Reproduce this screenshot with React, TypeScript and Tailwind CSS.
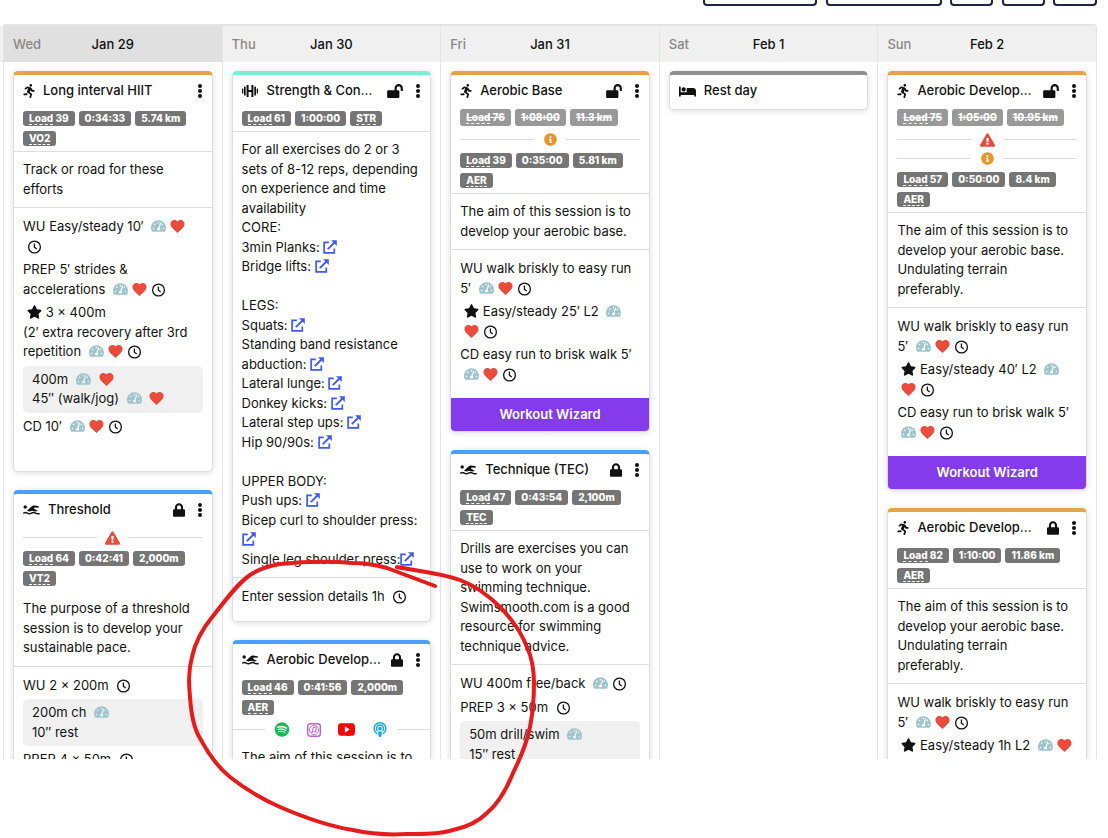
import React from 'react';
import { FaBed, FaExclamationTriangle, FaInfoCircle, FaLock, FaLockOpen, FaPodcast, FaRunning, FaSpotify, FaStar, FaTachometerAlt } from 'react-icons/fa';
import { IoLogoYoutube } from 'react-icons/io5';

type Sport = 'run' | 'swim' | 'strength' | 'rest';

const barColors: Record<Sport, string> = {
  run: 'border-t-[#e6a44a]',
  swim: 'border-t-[#4a9ff8]',
  strength: 'border-t-[#7aefd8]',
  rest: 'border-t-[#909090]',
};

function Swimmer() {
  return (
    <svg viewBox="0 0 17 10" className="w-[17px] h-[10px] mr-2 shrink-0" fill="currentColor">
      <circle cx="2.2" cy="2" r="1.7" />
      <path d="M4 5.8L8.2 1.8C9.2.9 10.3.5 11.5.6L15.8 1.2 15.6 2.7 11.8 2.6 10.8 3.4 15 6 12 6.6 9.2 5.8 6.5 6.6Z" />
      <path d="M.3 8.4C1.8 7.2 3 7.4 4.3 8.2S7 9.1 8.5 8.2 11.3 7.4 12.6 8.2 15.2 9 16.7 8.6" fill="none" stroke="currentColor" strokeWidth="1.5" />
    </svg>
  );
}

function Barbell() {
  return (
    <svg viewBox="0 0 16 12" className="w-4 h-3 mr-[9px] shrink-0" fill="currentColor">
      <rect x="0" y="3.5" width="1.3" height="5" rx=".5" />
      <rect x="2" y="1.5" width="1.7" height="9" rx=".6" />
      <rect x="4.6" y="0" width="2" height="12" rx=".6" />
      <rect x="6" y="5" width="4" height="2" />
      <rect x="9.4" y="0" width="2" height="12" rx=".6" />
      <rect x="12.3" y="1.5" width="1.7" height="9" rx=".6" />
      <rect x="14.7" y="3.5" width="1.3" height="5" rx=".5" />
    </svg>
  );
}

const sportIcons: Record<Sport, React.ReactNode> = {
  run: <FaRunning className="w-3 h-[14px] mr-2 shrink-0" />,
  swim: <Swimmer />,
  strength: <Barbell />,
  rest: <FaBed className="w-[17px] h-[15px] mr-2 shrink-0" />,
};

const Pace = () => <FaTachometerAlt className="inline-block align-[-2px] w-[15px] h-[14px] ml-1 text-[#9fc5cf]" />;
const Star = () => <FaStar className="inline-block align-[-2px] w-[15px] h-[14px] ml-1" />;

const Heart = () => (
  <svg viewBox="2 3 20 18.4" className="inline-block align-[-2px] w-[15px] h-[13px] ml-1 text-[#ea4c3c]" fill="currentColor">
    <path d="M12 21.35l-1.45-1.32C5.4 15.36 2 12.28 2 8.5 2 5.42 4.42 3 7.5 3c1.74 0 3.41.81 4.5 2.09C13.09 3.81 14.76 3 16.5 3 19.58 3 22 5.42 22 8.5c0 3.78-3.4 6.86-8.55 11.54L12 21.35z" />
  </svg>
);

const Clock = () => (
  <svg viewBox="0 0 14 14" className="inline-block align-[-3px] w-[15px] h-[14px] ml-1" fill="none" stroke="currentColor">
    <circle cx="7" cy="7" r="5.9" strokeWidth="1.3" />
    <path d="M6.9 3.6V7.2L9.2 9.1" strokeWidth="1.3" />
  </svg>
);

function Video({ name }: { name: string }) {
  return (
    <a href="#" aria-label={name} className="text-[#3d5afe]">
      <svg viewBox="0 0 14 14" className="inline-block align-[-2px] w-[14px] h-[14px]" fill="none" stroke="currentColor" strokeWidth="1.7">
        <path d="M5.8 2.4H1.1V12.9H11.3V8.4" />
        <path d="M4.8 9.2L12 2" strokeWidth="1.9" />
        <path d="M8 .2H13.8V6L11.9 4.1 9.9 2.1Z" fill="currentColor" stroke="none" />
      </svg>
    </a>
  );
}

function Dots() {
  return (
    <svg viewBox="0 0 4 14" className="w-1 h-[14px]" fill="currentColor">
      <circle cx="2" cy="2" r="2" />
      <circle cx="2" cy="7" r="2" />
      <circle cx="2" cy="12" r="2" />
    </svg>
  );
}

function Chips({ items, planned }: { items: string[]; planned?: boolean }) {
  return (
    <div className={planned ? 'flex gap-1 mb-1' : 'flex flex-wrap gap-x-1 gap-y-[5px] pt-[2px]'}>
      {items.map((item) => {
        const [first, ...rest] = item.split(' ');
        const dashed = /^[A-Z]/.test(first);
        return (
          <span
            key={item}
            className={
              planned
                ? 'h-[17px] px-[6px] rounded-[3px] bg-[#999] text-white text-[10px] leading-4 font-extrabold line-through'
                : 'h-[15px] px-[6px] rounded-[3px] bg-[#757575] text-white text-[10px] leading-[14px] font-extrabold'
            }
          >
            {dashed ? <span className="border-b border-dashed border-white">{first}</span> : first}
            {rest.length > 0 && ' ' + rest.join(' ')}
          </span>
        );
      })}
    </div>
  );
}

function Notice({ kind }: { kind: 'warning' | 'info' }) {
  return (
    <div className="flex items-center gap-2 h-[19px]">
      <div className="flex-1 h-px bg-[#ddd]" />
      <div className="w-4 flex justify-center">
        {kind === 'warning' ? (
          <FaExclamationTriangle className="w-[15px] h-[14px] text-[#e74c3c]" />
        ) : (
          <FaInfoCircle className="w-[13px] h-[13px] text-[#e8952a]" />
        )}
      </div>
      <div className="flex-1 h-px bg-[#ddd]" />
    </div>
  );
}

interface CardProps {
  sport: Sport;
  title: string;
  lock?: 'open' | 'closed';
  planned?: string[];
  notices?: ('warning' | 'info')[];
  chips?: string[];
  wizard?: boolean;
  children?: React.ReactNode;
}

function Card({ sport, title, lock, planned, notices = [], chips, wizard, children }: CardProps) {
  return (
    <article
      className={`rounded-[5px] border border-t-4 border-[#ddd] bg-white shadow-[0_1px_6px_rgba(0,0,0,0.14)] overflow-hidden ${barColors[sport]}`}
    >
      <div className="flex items-center h-[30px] pt-[2px] px-[9px]">
        {sportIcons[sport]}
        <h3 className="flex-1 min-w-0 truncate font-medium">{title}</h3>
        {lock === 'open' && <FaLockOpen className="w-4 h-[14px] ml-[10px] shrink-0" />}
        {lock === 'closed' && <FaLock className="w-3 h-[14px] ml-2 shrink-0" />}
        {chips && (
          <button aria-label="Workout menu" className="ml-3 w-[6px] flex justify-center shrink-0">
            <Dots />
          </button>
        )}
      </div>
      {chips ? (
        <div className="px-[9px] pt-1 pb-[5px]">
          {planned && <Chips items={planned} planned />}
          {notices.length > 0 && (
            <div className="mb-[2px]">
              {notices.map((kind) => (
                <Notice key={kind} kind={kind} />
              ))}
            </div>
          )}
          <Chips items={chips} />
        </div>
      ) : (
        <div className="h-1" />
      )}
      {children}
      {wizard && (
        <button className="block w-full h-[33px] bg-[#833bec] text-white font-semibold">Workout Wizard</button>
      )}
    </article>
  );
}

function Text({ plain, children }: { plain?: boolean; children: React.ReactNode }) {
  return <div className={plain ? 'px-[9px] py-2' : 'px-[9px] py-2 border-t border-[#ddd]'}>{children}</div>;
}

function Steps({ children }: { children: React.ReactNode }) {
  return <div className="px-[9px] pt-[9px] pb-[14px] border-t border-[#ddd] flex flex-col gap-1">{children}</div>;
}

function Repeat({ children }: { children: React.ReactNode }) {
  return <div className="rounded-[5px] bg-[#f0f0f0] px-[9px] py-1">{children}</div>;
}

function MusicNote() {
  return (
    <svg viewBox="0 0 14 14" className="w-[14px] h-[14px] text-[#b664d2]" fill="none" stroke="currentColor">
      <rect x=".7" y=".7" width="12.6" height="12.6" rx="2.6" strokeWidth="1.4" />
      <circle cx="7" cy="7" r="4.6" strokeWidth=".9" />
      <path d="M5.9 8.9V4.6L9 4V8.2" strokeWidth="1" />
      <circle cx="5.2" cy="9" r="1" fill="currentColor" stroke="none" />
      <circle cx="8.3" cy="8.4" r="1" fill="currentColor" stroke="none" />
    </svg>
  );
}

function Podcasts() {
  return (
    <div className="flex items-center h-5">
      <div className="flex-1 h-px bg-[#ddd]" />
      <div className="flex items-center gap-[17px] px-[9px]">
        <a href="#" aria-label="Spotify"><FaSpotify className="w-4 h-[15px] text-[#1db954]" /></a>
        <a href="#" aria-label="Apple Music"><MusicNote /></a>
        <a href="#" aria-label="YouTube"><IoLogoYoutube className="w-[17px] h-[17px] text-[#f00]" /></a>
        <a href="#" aria-label="Podcasts"><FaPodcast className="w-4 h-[15px] text-[#17a9e0]" /></a>
      </div>
      <div className="flex-1 h-px bg-[#ddd]" />
    </div>
  );
}

function Day({ name, date, today, children }: { name: string; date: string; today?: boolean; children: React.ReactNode }) {
  return (
    <section className="border-l border-[#e4e4e4] min-w-0">
      <h2
        className={
          today
            ? 'relative h-9 pt-[2px] flex items-center justify-center bg-[#e0e0e0] font-medium'
            : 'relative h-9 pt-[2px] flex items-center justify-center bg-[#f0f0f0] font-medium'
        }
      >
        <span className="absolute left-[9px] text-[#888]">{name}</span>
        {date}
      </h2>
      <div className="flex flex-col gap-[18px] p-[9px]">{children}</div>
    </section>
  );
}

export default function App() {
  const toolbar = [
    { label: 'Library', width: 'w-[114px]' },
    { label: 'Season plan', width: 'w-[116px] ml-[9px]' },
    { label: 'Previous', width: 'w-[43px] ml-2' },
    { label: 'Today', width: 'w-[43px] ml-[9px]' },
    { label: 'Next', width: 'w-[44px] ml-2' },
  ];

  return (
    <div className="relative h-screen overflow-hidden flex flex-col bg-white text-[#111] text-[13px] leading-normal font-['Inter',sans-serif]">
      {/* Toolbar */}
      <header className="h-6 shrink-0 flex justify-end items-start pr-[11px]">
        {toolbar.map((item) => (
          <button
            key={item.label}
            aria-label={item.label}
            className={`h-[6px] rounded-b-[4px] border-2 border-t-0 border-[#1f2344] ${item.width}`}
          />
        ))}
      </header>

      {/* Calendar */}
      <main className="flex-1 min-h-0 overflow-hidden flex mb-[79px]">
        <div className="w-[3px] shrink-0 mt-[2px] h-9 bg-[#f0f0f0]" />
        <div className="flex-1 grid grid-cols-5 mr-[11px] h-max min-h-full border-r border-t-2 border-[#e4e4e4] rounded-tr-[4px]">
          <Day name="Wed" date="Jan 29" today>
            <Card sport="run" title="Long interval HIIT" chips={['Load 39', '0:34:33', '5.74 km', 'VO2']}>
              <Text>Track or road for these efforts</Text>
              <Steps>
                <div>WU Easy/steady 10′ <Pace /><Heart /><Clock /></div>
                <div>PREP 5′ strides &amp; accelerations <Pace /><Heart /><Clock /></div>
                <div>
                  <Star /> 3 × 400m
                  <br />
                  (2′ extra recovery after 3rd repetition <Pace /><Heart /><Clock />
                </div>
                <Repeat>
                  <div>400m <Pace /> <Heart /></div>
                  <div>45″ (walk/jog) <Pace /> <Heart /></div>
                </Repeat>
                <div>CD 10′ <Pace /><Heart /><Clock /></div>
                <div className="h-[17px]" />
              </Steps>
            </Card>
            <Card sport="swim" title="Threshold" lock="closed" notices={['warning']} chips={['Load 64', '0:42:41', '2,000m', 'VT2']}>
              <Text plain>The purpose of a threshold session is to develop your sustainable pace.</Text>
              <Steps>
                <div>WU 2 × 200m <Clock /></div>
                <Repeat>
                  <div>200m ch <Pace /></div>
                  <div>10″ rest</div>
                </Repeat>
                <div>PREP 4 × 50m <Clock /></div>
              </Steps>
            </Card>
          </Day>

          <Day name="Thu" date="Jan 30">
            <Card sport="strength" title="Strength & Conditioning" lock="open" chips={['Load 61', '1:00:00', 'STR']}>
              <Text>
                <p>For all exercises do 2 or 3 sets of 8-12 reps, depending on experience and time availability</p>
                <p>CORE:</p>
                <p>3min Planks: <Video name="3min Planks" /></p>
                <p>Bridge lifts: <Video name="Bridge lifts" /></p>
                <br />
                <p>LEGS:</p>
                <p>Squats: <Video name="Squats" /></p>
                <p>Standing band resistance abduction: <Video name="Standing band resistance abduction" /></p>
                <p>Lateral lunge: <Video name="Lateral lunge" /></p>
                <p>Donkey kicks: <Video name="Donkey kicks" /></p>
                <p>Lateral step ups: <Video name="Lateral step ups" /></p>
                <p>Hip 90/90s: <Video name="Hip 90/90s" /></p>
                <br />
                <p>UPPER BODY:</p>
                <p>Push ups: <Video name="Push ups" /></p>
                <p>Bicep curl to shoulder press: <Video name="Bicep curl to shoulder press" /></p>
                <p>Single leg shoulder press:<Video name="Single leg shoulder press" /></p>
              </Text>
              <Steps>
                <div>Enter session details 1h <Clock /></div>
              </Steps>
            </Card>
            <Card sport="swim" title="Aerobic Development" lock="closed" chips={['Load 46', '0:41:56', '2,000m', 'AER']}>
              <Podcasts />
              <Text plain>The aim of this session is to develop your aerobic base.</Text>
            </Card>
          </Day>

          <Day name="Fri" date="Jan 31">
            <Card
              sport="run"
              title="Aerobic Base"
              lock="open"
              planned={['Load 76', '1:08:00', '11.3 km']}
              notices={['info']}
              chips={['Load 39', '0:35:00', '5.81 km', 'AER']}
              wizard
            >
              <Text>The aim of this session is to develop your aerobic base.</Text>
              <Steps>
                <div>WU walk briskly to easy run 5′ <Pace /><Heart /><Clock /></div>
                <div><Star /> Easy/steady 25′ L2 <Pace /><Heart /><Clock /></div>
                <div>CD easy run to brisk walk 5′ <Pace /><Heart /><Clock /></div>
              </Steps>
            </Card>
            <Card sport="swim" title="Technique (TEC)" lock="closed" chips={['Load 47', '0:43:54', '2,100m', 'TEC']}>
              <Text>
                Drills are exercises you can use to work on your swimming technique. Swimsmooth.com is a good resource for
                swimming technique advice.
              </Text>
              <Steps>
                <div>WU 400m free/back <Pace /><Clock /></div>
                <div>PREP 3 × 50m <Clock /></div>
                <Repeat>
                  <div>50m drill/swim <Pace /></div>
                  <div>15″ rest</div>
                </Repeat>
              </Steps>
            </Card>
          </Day>

          <Day name="Sat" date="Feb 1">
            <Card sport="rest" title="Rest day" />
          </Day>

          <Day name="Sun" date="Feb 2">
            <Card
              sport="run"
              title="Aerobic Development"
              lock="open"
              planned={['Load 75', '1:05:00', '10.95 km']}
              notices={['warning', 'info']}
              chips={['Load 57', '0:50:00', '8.4 km', 'AER']}
              wizard
            >
              <Text>The aim of this session is to develop your aerobic base. Undulating terrain preferably.</Text>
              <Steps>
                <div>WU walk briskly to easy run 5′ <Pace /><Heart /><Clock /></div>
                <div><Star /> Easy/steady 40′ L2 <Pace /><Heart /><Clock /></div>
                <div>CD easy run to brisk walk 5′ <Pace /><Heart /><Clock /></div>
              </Steps>
            </Card>
            <Card sport="run" title="Aerobic Development" lock="closed" chips={['Load 82', '1:10:00', '11.86 km', 'AER']}>
              <Text>The aim of this session is to develop your aerobic base. Undulating terrain preferably.</Text>
              <Steps>
                <div>WU walk briskly to easy run 5′ <Pace /><Heart /><Clock /></div>
                <div><Star /> Easy/steady 1h L2 <Pace /><Heart /></div>
              </Steps>
            </Card>
          </Day>
        </div>
      </main>

      {/* Hand-drawn marker */}
      <svg
        viewBox="180 550 370 288"
        className="absolute left-[180px] top-[550px] w-[370px] h-[288px] pointer-events-none"
        fill="none"
        stroke="#e51c1c"
        strokeWidth="4"
        strokeLinecap="round"
        strokeLinejoin="round"
      >
        <path d="M435 586L387 568C376 565 365 563 353 563C328 561 300 562 280 564C268 566 259 569 250 575C236 585 225 601 213 616C203 628 195 642 192 657C188 672 189 685 190 697C191 713 193 728 201 740C209 755 219 768 230 777C245 789 262 799 280 807C303 817 328 826 353 830C371 834 390 835 407 834C424 834 440 834 453 830C467 827 479 821 487 813C499 803 507 788 513 773C521 757 527 742 530 727C533 712 534 697 534 683C534 670 532 658 527 647C521 632 511 618 500 607C489 596 476 586 460 580C441 573 418 571 397 567" />
      </svg>
    </div>
  );
}
